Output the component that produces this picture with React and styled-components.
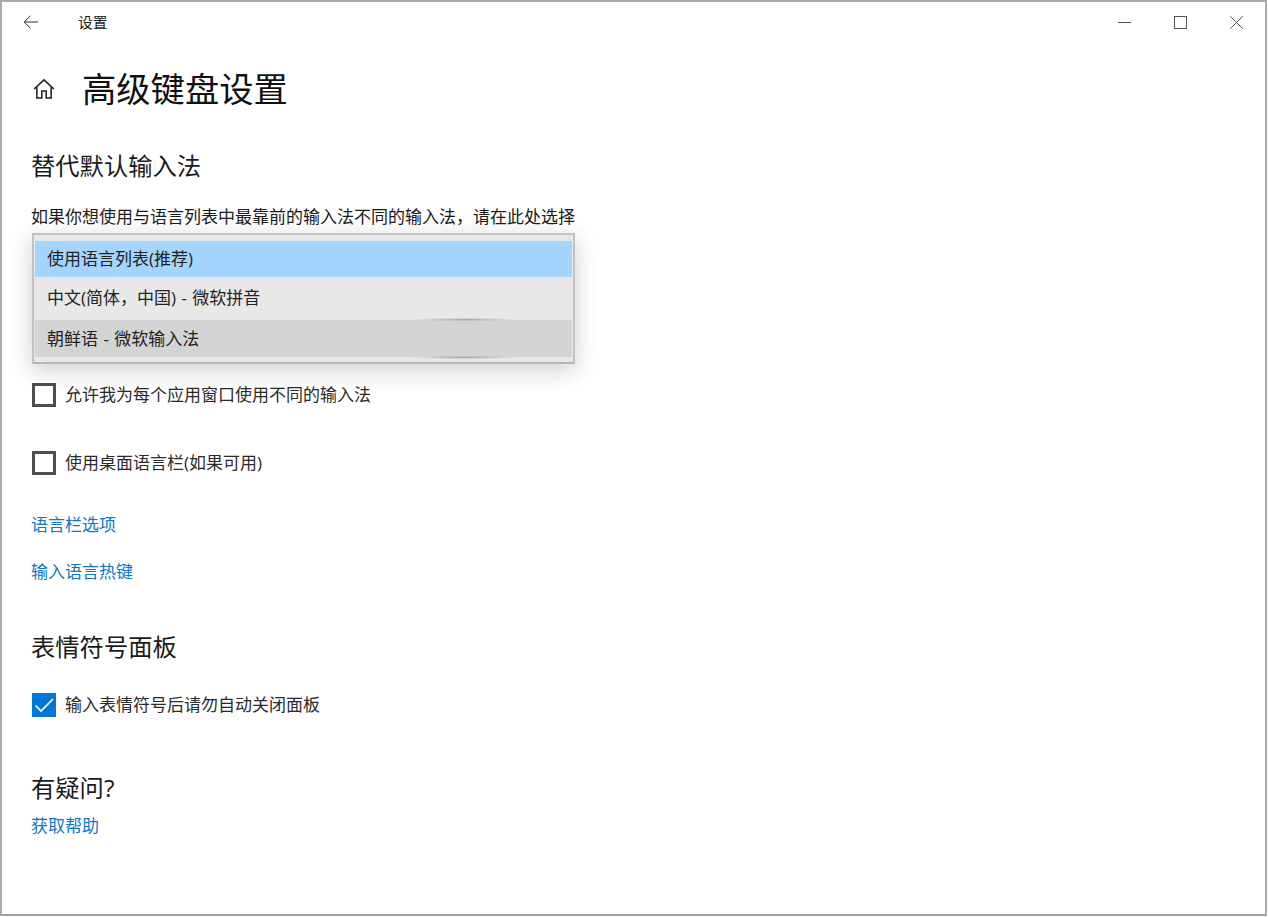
import React from 'react';
import styled, { createGlobalStyle } from 'styled-components';

const Global = createGlobalStyle`
  html, body {
    margin: 0;
    background: #fff;
    height: 917px;
    width: 1268px;
  }
  body {
    font-family: 'Open Sans', 'Noto Sans CJK SC', sans-serif;
    color: #1a1a1a;
  }
`;

const Window = styled.div`
  background: #fff;
  border: 2px solid #ababab;
  border-bottom-color: #a0a0a0;
  box-sizing: border-box;
  height: 916px;
  overflow: hidden;
  width: 1267px;
`;

const TitleBar = styled.div`
  align-items: center;
  display: flex;
  height: 40px;
`;

const BackButton = styled.div`
  align-items: center;
  display: flex;
  height: 40px;
  justify-content: center;
  margin-left: 5px;
  width: 48px;
`;

const WindowTitle = styled.div`
  font-size: 14.7px;
  line-height: 40px;
  margin-left: 23px;
`;

const WindowButtons = styled.div`
  display: flex;
  margin-left: auto;
  margin-right: 1px;
`;

const WindowButton = styled.div`
  align-items: center;
  display: flex;
  height: 40px;
  justify-content: center;
  width: 56px;
`;

const Content = styled.div`
  padding-left: 29px;
`;

const PageHeader = styled.div`
  align-items: center;
  display: flex;
  height: 50px;
  margin-top: 22px;
`;

const HomeIcon = styled.div`
  display: flex;
  margin-left: 2px;
  width: 50px;
`;

const PageTitle = styled.h1`
  color: #111;
  font-size: 34.3px;
  font-weight: 400;
  line-height: 50px;
  margin: 0 0 0 -1px;
`;

const SectionTitle = styled.h2`
  color: #1a1a1a;
  font-size: 24.3px;
  font-weight: 400;
  line-height: 34px;
  margin: ${(p) => p.$top}px 0 0;
`;

const Description = styled.div`
  font-size: 17px;
  line-height: 24px;
  margin-top: 22px;
`;

const ComboArea = styled.div`
  height: 136px;
  margin-top: 4px;
  position: relative;
`;

const Popup = styled.div`
  background: #e8e8e8;
  border: 2px solid #c2c2c2;
  border-bottom-color: #b4b4b4;
  box-shadow: 0 6px 22px rgba(0, 0, 0, 0.2);
  box-sizing: border-box;
  display: flex;
  flex-direction: column;
  height: 131px;
  left: 1px;
  padding: 6px 1px 5px;
  position: absolute;
  top: 0;
  width: 543px;
  z-index: 2;
`;

const Option = styled.div`
  align-items: center;
  background: ${(p) => p.$bg || 'transparent'};
  box-sizing: border-box;
  color: #222;
  display: flex;
  font-size: 17px;
  height: ${(p) => p.$height}px;
  padding-bottom: ${(p) => p.$lift}px;
  padding-left: 12px;
  position: relative;
  word-spacing: 1px;
`;

const Smudge = styled.div`
  background: radial-gradient(ellipse at center, rgba(90, 90, 90, 0.45), rgba(150, 150, 150, 0) 70%);
  height: 3px;
  left: 375px;
  position: absolute;
  top: ${(p) => p.$top}px;
  width: 110px;
`;

const CheckRow = styled.label`
  align-items: center;
  display: flex;
  font-size: 17px;
  height: 24px;
  margin-top: ${(p) => p.$top}px;
`;

const CheckBox = styled.div`
  align-items: center;
  background: ${(p) => (p.$checked ? '#0078d7' : '#fff')};
  border: ${(p) => (p.$checked ? 'none' : '3px solid #4f4f4f')};
  box-sizing: border-box;
  display: flex;
  flex-shrink: 0;
  height: 24px;
  justify-content: center;
  margin-left: 1px;
  margin-right: 9px;
  width: 24px;
`;

const CheckLabel = styled.span`
  color: #2a2a2a;
  line-height: 24px;
`;

const LinkText = styled.a`
  color: #0d76c9;
  display: block;
  font-size: 17px;
  line-height: 24px;
  margin-top: ${(p) => p.$top}px;
  text-decoration: none;
`;

const App = () => (
  <>
    <Global />
    <Window>
      <TitleBar>
        <BackButton>
          <svg width="16" height="14" viewBox="0 0 16 14" fill="none" stroke="#333" strokeWidth="1">
            <path d="M15 7H1.2M7.5.7 1.2 7l6.3 6.3" />
          </svg>
        </BackButton>
        <WindowTitle>设置</WindowTitle>
        <WindowButtons>
          <WindowButton>
            <svg width="13" height="13" viewBox="0 0 13 13" fill="none" stroke="#555" strokeWidth="1">
              <path d="M0 6.5h13" />
            </svg>
          </WindowButton>
          <WindowButton>
            <svg width="13" height="13" viewBox="0 0 13 13" fill="none" stroke="#555" strokeWidth="1">
              <rect x=".5" y=".5" width="12" height="12" />
            </svg>
          </WindowButton>
          <WindowButton>
            <svg width="13" height="13" viewBox="0 0 13 13" fill="none" stroke="#555" strokeWidth="1">
              <path d="M.3.3l12.4 12.4M12.7.3.3 12.7" />
            </svg>
          </WindowButton>
        </WindowButtons>
      </TitleBar>
      <Content>
        <PageHeader>
          <HomeIcon>
            <svg width="22" height="22" viewBox="0 0 23 22" fill="none" stroke="#222" strokeWidth="1.6">
              <path d="M1.2 11 11.5 1.5 21.8 11M4 8.6V20.5H9.2V13.2H13.8V20.5H19V8.6" />
            </svg>
          </HomeIcon>
          <PageTitle>高级键盘设置</PageTitle>
        </PageHeader>
        <SectionTitle $top={35}>替代默认输入法</SectionTitle>
        <Description>如果你想使用与语言列表中最靠前的输入法不同的输入法，请在此处选择</Description>
        <ComboArea>
          <Popup>
            <Option $bg="#a3d5ff" $height={36} $lift={3}>使用语言列表(推荐)</Option>
            <Option $height={43} $lift={4}>中文(简体，中国) - 微软拼音</Option>
            <Option $bg="#d4d4d4" $height={37} $lift={3}>
              朝鲜语 - 微软输入法
              <Smudge $top={-2} />
              <Smudge $top={36} />
            </Option>
          </Popup>
        </ComboArea>
        <CheckRow $top={14}>
          <CheckBox />
          <CheckLabel>允许我为每个应用窗口使用不同的输入法</CheckLabel>
        </CheckRow>
        <CheckRow $top={44}>
          <CheckBox />
          <CheckLabel>使用桌面语言栏(如果可用)</CheckLabel>
        </CheckRow>
        <LinkText $top={38}>语言栏选项</LinkText>
        <LinkText $top={23}>输入语言热键</LinkText>
        <SectionTitle $top={46}>表情符号面板</SectionTitle>
        <CheckRow $top={29}>
          <CheckBox $checked>
            <svg width="24" height="24" viewBox="0 0 24 24" fill="none" stroke="#fff" strokeWidth="1.7">
              <path d="M3.5 12.5 9 18 21 6" />
            </svg>
          </CheckBox>
          <CheckLabel>输入表情符号后请勿自动关闭面板</CheckLabel>
        </CheckRow>
        <SectionTitle $top={54}>有疑问?</SectionTitle>
        <LinkText $top={9}>获取帮助</LinkText>
      </Content>
    </Window>
  </>
);

export default App;
